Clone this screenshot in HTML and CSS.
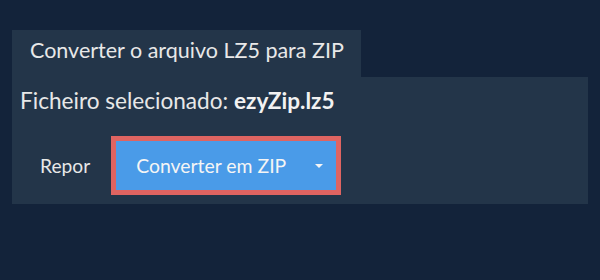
FILE: index.html
```html
<!DOCTYPE html>
<html>
<head>
<meta charset="utf-8">
<link rel="stylesheet" href="styles.css">
</head>
<body>
<div class="wrap">
  <div class="tab">Converter o arquivo LZ5 para ZIP</div>
  <div class="panel">
    <div class="selected">Ficheiro selecionado: <b>ezyZip.lz5</b></div>
    <div class="actions">
      <button class="reset">Repor</button>
      <button class="convert"><span class="label">Converter em ZIP</span><span class="caret"></span></button>
    </div>
  </div>
</div>
</body>
</html>
```
FILE: styles.css
```css
html, body {
  margin: 0;
  padding: 0;
  background: #13233a;
  width: 600px;
  height: 280px;
  overflow: hidden;
}
body {
  font-family: Lato, "Open Sans", sans-serif;
  color: #e8e8e8;
}
.wrap {
  padding: 30px 12px 0 12px;
}
.tab {
  display: inline-block;
  vertical-align: top;
  background: #233549;
  height: 47px;
  line-height: 40px;
  padding: 0 17px 0 18px;
  font-size: 21.5px;
}
.panel {
  background: #233549;
  padding: 9px 8px 9px 8px;
}
.selected {
  font-size: 22.6px;
  line-height: 30px;
  margin-bottom: 20px;
}
.selected b {
  font-weight: 700;
  color: #f2f2f2;
}
.actions {
  display: flex;
  align-items: center;
}
.reset {
  background: transparent;
  border: none;
  color: #e8e8e8;
  font-family: inherit;
  font-size: 19.2px;
  padding: 0 20px;
  margin-right: 1px;
  height: 59px;
}
.convert {
  display: flex;
  align-items: center;
  background: #4a9be8;
  border: 5px solid #df6461;
  color: #f5f5f5;
  font-family: inherit;
  font-size: 19.4px;
  height: 59px;
  width: 230px;
  padding: 0 13px 0 20px;
}
.convert .label {
  flex: 1;
  text-align: left;
}
.caret {
  width: 0;
  height: 0;
  border-left: 4px solid transparent;
  border-right: 4px solid transparent;
  border-top: 4px solid #f5f5f5;
  margin-top: 1px;
}
```
